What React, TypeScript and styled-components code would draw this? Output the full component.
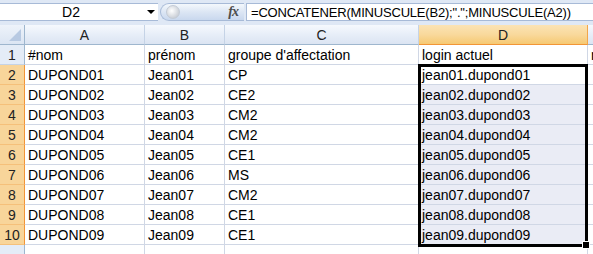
import * as React from 'react';
import styled, { createGlobalStyle } from 'styled-components';

const GlobalStyle = createGlobalStyle`
  html, body {
    margin: 0;
    padding: 0;
    background: #ffffff;
    overflow: hidden;
  }
  body {
    font-family: 'Liberation Sans', Arial, sans-serif;
  }
`;

const rows: [string, string, string, string][] = [
  ['#nom', 'prénom', "groupe d'affectation", 'login actuel'],
  ['DUPOND01', 'Jean01', 'CP', 'jean01.dupond01'],
  ['DUPOND02', 'Jean02', 'CE2', 'jean02.dupond02'],
  ['DUPOND03', 'Jean03', 'CM2', 'jean03.dupond03'],
  ['DUPOND04', 'Jean04', 'CM2', 'jean04.dupond04'],
  ['DUPOND05', 'Jean05', 'CE1', 'jean05.dupond05'],
  ['DUPOND06', 'Jean06', 'MS', 'jean06.dupond06'],
  ['DUPOND07', 'Jean07', 'CM2', 'jean07.dupond07'],
  ['DUPOND08', 'Jean08', 'CE1', 'jean08.dupond08'],
  ['DUPOND09', 'Jean09', 'CE1', 'jean09.dupond09'],
];

const columns = ['A', 'B', 'C', 'D', 'E'];

const Window = styled.div`
  width: 593px;
  height: 254px;
  overflow: hidden;
  background: #dfe8f5;
  display: flex;
  flex-direction: column;
`;

const FormulaBar = styled.div`
  height: 23px;
  margin-top: 3px;
  display: flex;
  align-items: stretch;
`;

const NameBox = styled.div`
  width: 158px;
  background: #ffffff;
  border-top: 1px solid #a7bad7;
  border-bottom: 1px solid #a7bad7;
  box-sizing: border-box;
  display: flex;
  align-items: center;
  font-size: 14px;
  color: #000;
`;

const NameText = styled.span`
  width: 142px;
  text-align: center;
`;

const DropArrow = styled.span`
  width: 0;
  height: 0;
  border-left: 4px solid transparent;
  border-right: 4px solid transparent;
  border-top: 4px solid #000;
  margin-left: 5px;
`;

const Capsule = styled.div`
  width: 84px;
  margin-left: 2px;
  border-radius: 12px 0 0 12px;
  background: linear-gradient(#f4f8fc 0%, #dce6f4 50%, #c9d8ee 100%);
  border: 1px solid #a7bad7;
  border-right: none;
  box-sizing: border-box;
  display: flex;
  align-items: center;
  justify-content: space-between;
  padding: 0 6px 0 5px;
`;

const Knob = styled.span`
  width: 12px;
  height: 12px;
  border-radius: 50%;
  background: radial-gradient(circle at 40% 40%, #ffffff 0%, #d4d8de 60%, #b8bec8 100%);
  border: 1px solid #c3cbd6;
`;

const Fx = styled.span`
  font-family: 'Liberation Serif', 'Times New Roman', serif;
  font-style: italic;
  font-weight: bold;
  font-size: 14px;
  color: #4d4d4d;
  letter-spacing: -1px;
`;

const FormulaInput = styled.div`
  flex: 1;
  margin-left: 2px;
  background: #ffffff;
  border: 1px solid #a7bad7;
  border-right: none;
  box-sizing: border-box;
  display: flex;
  align-items: center;
  padding-left: 4px;
  font-size: 13px;
  letter-spacing: -0.2px;
  color: #000;
  white-space: nowrap;
  overflow: hidden;
`;

const SheetArea = styled.div`
  margin-top: 4px;
  position: relative;
  flex: 1;
  background: #ffffff;
`;

const Grid = styled.div`
  display: grid;
  grid-template-columns: 25px 120px 80px 194px 169px 80px;
  grid-auto-rows: 20px;
`;

const Corner = styled.div`
  background: linear-gradient(#eef3fa, #dbe5f3);
  border-right: 1px solid #9eb6ce;
  border-bottom: 1px solid #9eb6ce;
  box-sizing: border-box;
  position: relative;
  &::after {
    content: '';
    position: absolute;
    right: 3px;
    bottom: 3px;
    border-left: 12px solid transparent;
    border-bottom: 12px solid #b7c9e2;
  }
`;

const ColHeader = styled.div<{ $active?: boolean }>`
  background: ${(p) =>
    p.$active
      ? 'linear-gradient(#fbe3b4 0%, #f9d99c 50%, #f6c973 100%)'
      : 'linear-gradient(#f6f9fd 0%, #e7eef8 50%, #dbe4f2 100%)'};
  border-right: 1px solid ${(p) => (p.$active ? '#f2a64b' : '#c5d3e6')};
  border-bottom: 1px solid ${(p) => (p.$active ? '#f29536' : '#9eb6ce')};
  box-sizing: border-box;
  display: flex;
  align-items: center;
  justify-content: center;
  font-size: 14px;
  color: #222;
`;

const RowHeader = styled.div<{ $active?: boolean }>`
  background: ${(p) => (p.$active ? '#f8d59a' : '#e4ecf7')};
  border-right: 1px solid ${(p) => (p.$active ? '#f29536' : '#9eb6ce')};
  border-bottom: 1px solid ${(p) => (p.$active ? '#f5c07a' : '#c5d3e6')};
  box-sizing: border-box;
  display: flex;
  align-items: center;
  justify-content: center;
  font-size: 14px;
  color: #222;
`;

const Cell = styled.div<{ $selected?: boolean }>`
  background: ${(p) => (p.$selected ? '#eaecf5' : '#ffffff')};
  border-right: 1px solid #d0d7e5;
  border-bottom: 1px solid #d0d7e5;
  box-sizing: border-box;
  display: flex;
  align-items: center;
  padding-left: 3px;
  font-size: 14px;
  color: #000;
  white-space: nowrap;
  overflow: hidden;
`;

const Selection = styled.div`
  position: absolute;
  left: 418px;
  top: 39px;
  width: 170px;
  height: 183px;
  border: 3px solid #000;
  box-sizing: border-box;
  pointer-events: none;
`;

const FillHandle = styled.div`
  position: absolute;
  right: -5px;
  bottom: -5px;
  width: 6px;
  height: 6px;
  background: #000;
  border: 1px solid #fff;
`;

export default function App() {
  return (
    <>
      <GlobalStyle />
      <Window>
        <FormulaBar>
          <NameBox>
            <NameText>D2</NameText>
            <DropArrow />
          </NameBox>
          <Capsule>
            <Knob />
            <Fx>fx</Fx>
          </Capsule>
          <FormulaInput>=CONCATENER(MINUSCULE(B2);".";MINUSCULE(A2))</FormulaInput>
        </FormulaBar>
        <SheetArea>
          <Grid>
            <Corner />
            {columns.map((c) => (
              <ColHeader key={c} $active={c === 'D'}>
                {c}
              </ColHeader>
            ))}
            {rows.map((r, i) => (
              <React.Fragment key={i}>
                <RowHeader $active={i > 0}>{i + 1}</RowHeader>
                {r.map((v, j) => (
                  <Cell key={j} $selected={j === 3 && i > 1}>
                    {v}
                  </Cell>
                ))}
                <Cell>{i === 0 ? 'n' : ''}</Cell>
              </React.Fragment>
            ))}
            <RowHeader />
            {columns.map((c) => (
              <Cell key={c} />
            ))}
          </Grid>
          <Selection>
            <FillHandle />
          </Selection>
        </SheetArea>
      </Window>
    </>
  );
}
